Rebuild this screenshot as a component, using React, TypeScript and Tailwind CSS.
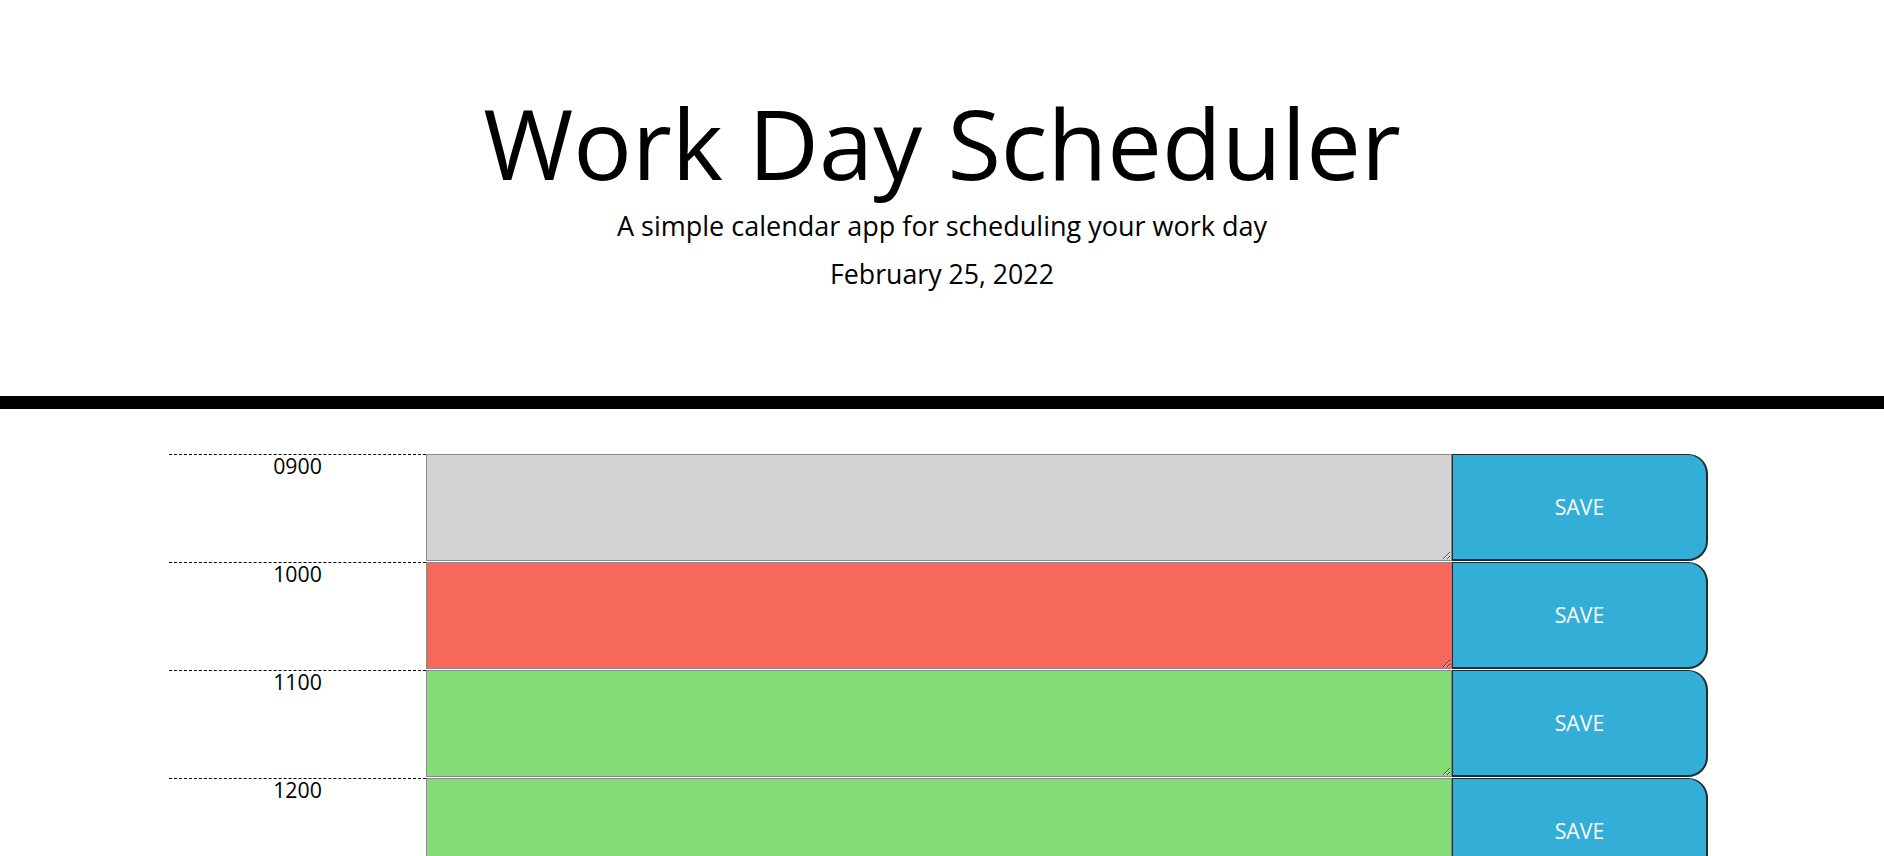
import React from "react";

const hours = ["0900", "1000", "1100", "1200", "1300", "1400", "1500", "1600", "1700"];

// 9am is past, 10am is now, the rest is still ahead
function blockColor(i: number) {
  if (i === 0) return "bg-[#d3d3d3]";
  if (i === 1) return "bg-[#f6675c]";
  return "bg-[#84dc79]";
}

function TimeBlock({ hour, index }: { hour: string; index: number }) {
  return (
    <div className="flex h-[108px] border-t border-white">
      <div className="w-[257px] shrink-0 border-t border-dashed border-black text-center text-[21.3px] leading-[20px] pt-[1px] text-black">
        {hour}
      </div>
      <textarea
        className={`flex-1 h-full border border-[#8a8a8a] p-[13px] text-black outline-none ${blockColor(index)}`}
      />
      <button className="w-[256px] shrink-0 h-full bg-[#33aed6] text-white text-[21.3px] border border-[#1b2a33] border-b-2 border-r-2 rounded-r-[20px]">
        SAVE
      </button>
    </div>
  );
}

export default function App() {
  return (
    <div className="min-h-screen bg-white text-black font-['Open_Sans',sans-serif]">
      <header className="text-center border-b-[13px] border-black pt-[85px] pb-[83px] mb-[44px]">
        <h1 className="text-[97.5px] font-normal leading-[115px] mb-[6px]">Work Day Scheduler</h1>
        <p className="text-[27px] font-normal leading-[40px]">
          A simple calendar app for scheduling your work day
        </p>
        <p className="text-[26.7px] leading-[40px] mt-[8px] mb-[19px]">February 25, 2022</p>
      </header>

      <div className="ml-[169px] w-[1539px]">
        {hours.map((h, i) => (
          <TimeBlock key={h} hour={h} index={i} />
        ))}
      </div>
    </div>
  );
}
